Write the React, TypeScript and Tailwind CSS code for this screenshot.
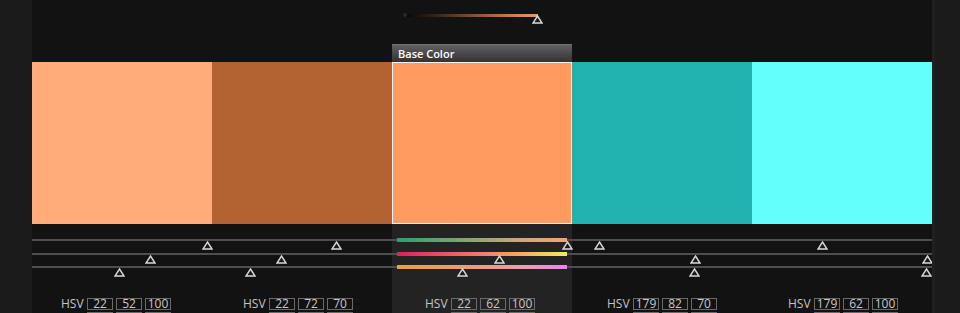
import React from "react";

type Col = {
  color: string;
  hsv: [number, number, number];
  pad: string;
  thumbs: [number, number, number];
  base?: boolean;
};

const cols: Col[] = [
  { color: "#FFAB7A", hsv: [22, 52, 100], pad: "pl-[29px]", thumbs: [175, 118, 87] },
  { color: "#B36232", hsv: [22, 72, 70], pad: "pl-[31px]", thumbs: [124, 69, 38] },
  { color: "#FF9B61", hsv: [22, 62, 100], pad: "pl-[33px]", thumbs: [175, 107, 70], base: true },
  { color: "#22B3B0", hsv: [179, 82, 70], pad: "pl-[35px]", thumbs: [27, 123, 122] },
  { color: "#63FFFC", hsv: [179, 62, 100], pad: "pl-[36px]", thumbs: [70, 175, 174] },
];

const barGradients = [
  "linear-gradient(to right, #2f9e6c, #8ea672 45%, #d6a678 75%, #f2a474)",
  "linear-gradient(to right, #e01e5c, #ee6a66 40%, #f2b066 75%, #f2ec60)",
  "linear-gradient(to right, #f0a034, #f09a70 40%, #f09ab0 75%, #e486f0)",
];

function Thumb({ x, y }: { x: number; y: number }) {
  return (
    <svg
      width="11"
      height="9"
      viewBox="0 0 11 9"
      className="absolute"
      style={{ left: x - 5.5, top: y }}
    >
      <polygon points="5.5,1 10,8 1,8" fill="#1a1a1a" stroke="#d8d8d8" strokeWidth="1.4" strokeLinejoin="miter" />
    </svg>
  );
}

function NumBox({ v }: { v: number }) {
  return (
    <div className="w-[26px] h-[12px] border border-[#6a6a6a] flex items-center justify-center text-[12px] leading-none text-[#c8c8c8]">
      {v}
    </div>
  );
}

export default function App() {
  const trackTops = [15, 29, 42];
  return (
    <div
      className="w-[960px] h-[313px] bg-[#1b1b1b] flex overflow-hidden"
      style={{ fontFamily: "'Open Sans', 'Noto Sans', sans-serif" }}
    >
      <div className="ml-[32px] w-[900px] h-full bg-[#121212] flex flex-col overflow-hidden">
        {/* top area with small slider */}
        <div className="h-[44px] shrink-0 grid grid-cols-5">
          <div />
          <div />
          <div className="relative">
            <div
              className="absolute left-[11px] top-[14px] w-[135px] h-[3px]"
              style={{ background: "linear-gradient(to right, #050505, #3a2418 25%, #b86a3e 70%, #f09a62)" }}
            />
            <div className="absolute left-[11px] top-[13px] w-[4px] h-[4px] rounded-full bg-[#2a2a2a]" />
            <Thumb x={145} y={15} />
          </div>
          <div />
          <div />
        </div>
        {/* header row */}
        <div className="h-[18px] shrink-0 grid grid-cols-5">
          <div />
          <div />
          <div className="bg-gradient-to-b from-[#626262] to-[#323232] border-t border-[#707070] flex items-center pl-[6px] text-[11px] font-semibold text-white leading-none">
            Base Color
          </div>
          <div />
          <div />
        </div>
        {/* swatches */}
        <div className="h-[162px] shrink-0 grid grid-cols-5">
          {cols.map((c, i) => (
            <div
              key={i}
              className={c.base ? "border border-[#f2f2f2]" : ""}
              style={{ backgroundColor: c.color }}
            />
          ))}
        </div>
        {/* sliders + hsv */}
        <div className="h-[89px] shrink-0 grid grid-cols-5">
          {cols.map((c, i) => (
            <div key={i} className={"relative flex flex-col " + (c.base ? "bg-[#232323]" : "")}>
              <div className="relative mt-[14px] h-[4px] shrink-0">
                <div className="absolute left-0 right-0 top-[1px] h-[2px] bg-[#4e4e4e]" />
                {c.base && (
                  <div className="absolute left-[5px] right-[5px] top-0 h-[4px]" style={{ background: barGradients[0] }} />
                )}
              </div>
              <div className="relative mt-[10px] h-[4px] shrink-0">
                <div className="absolute left-0 right-0 top-[1px] h-[2px] bg-[#4e4e4e]" />
                {c.base && (
                  <div className="absolute left-[5px] right-[5px] top-0 h-[4px]" style={{ background: barGradients[1] }} />
                )}
              </div>
              <div className="relative mt-[9px] h-[4px] shrink-0">
                <div className="absolute left-0 right-0 top-[1px] h-[2px] bg-[#4e4e4e]" />
                {c.base && (
                  <div className="absolute left-[5px] right-[5px] top-0 h-[4px]" style={{ background: barGradients[2] }} />
                )}
              </div>
              {c.thumbs.map((t, j) => (
                <Thumb key={j} x={t} y={trackTops[j] + 2} />
              ))}
              <div className={"mt-[29px] shrink-0 flex flex-col gap-[2px] " + c.pad}>
                <div className="flex items-center">
                  <span className="w-[26px] text-[12px] leading-none text-[#c4c4c4]">HSV</span>
                  <div className="flex gap-[3px]">
                    {c.hsv.map((v, k) => (
                      <NumBox key={k} v={v} />
                    ))}
                  </div>
                </div>
                <div className="flex items-center">
                  <span className="w-[26px]" />
                  <div className="flex gap-[3px]">
                    {[0, 1, 2].map((k) => (
                      <div key={k} className="w-[26px] h-[12px] border border-[#6a6a6a]" />
                    ))}
                  </div>
                </div>
              </div>
            </div>
          ))}
        </div>
      </div>
      <div className="w-[3px] h-full bg-[#202020]" />
    </div>
  );
}
